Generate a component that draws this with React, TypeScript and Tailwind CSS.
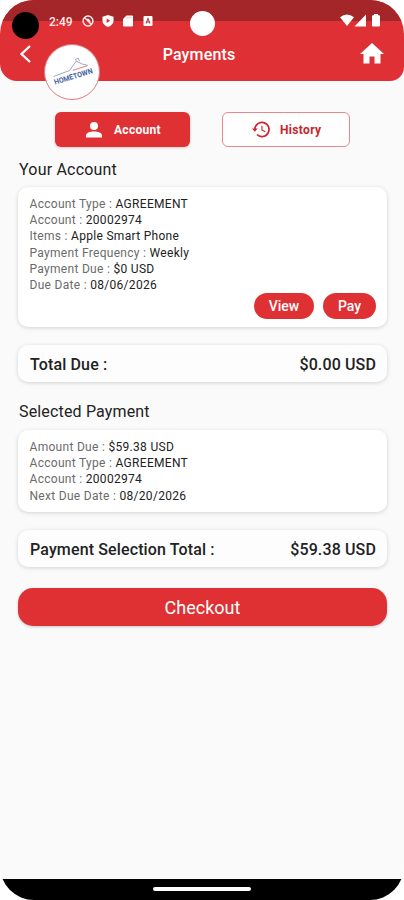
import type { ReactNode } from "react";

type Row = { label: string; value: string };

const accountRows: Row[] = [
  { label: "Account Type", value: "AGREEMENT" },
  { label: "Account", value: "20002974" },
  { label: "Items", value: "Apple Smart Phone" },
  { label: "Payment Frequency", value: "Weekly" },
  { label: "Payment Due", value: "$0 USD" },
  { label: "Due Date", value: "08/06/2026" },
];

const selectedRows: Row[] = [
  { label: "Amount Due", value: "$59.38 USD" },
  { label: "Account Type", value: "AGREEMENT" },
  { label: "Account", value: "20002974" },
  { label: "Next Due Date", value: "08/20/2026" },
];

function StatusBar() {
  return (
    <div className="flex h-[21px] items-start bg-[#a52628] pt-[12px] pr-[23px] pl-[12px]">
      <div className="h-[27px] w-[27px] shrink-0 rounded-full bg-black" />
      <span className="mt-[1px] ml-[10px] w-[25px] text-[12px] leading-[18px] font-medium text-[#ffe9e9]">
        2:49
      </span>
      <svg className="mt-[3px] ml-[8px] h-3 w-3 shrink-0" viewBox="0 0 12 12" fill="none" stroke="#ffe9e9" strokeWidth="1.500">
        <circle cx="6" cy="6" r="4.900" />
        <path d="M2.800 2.800l6.400 6.400M5.500 3.700l2.800 2.800" />
      </svg>
      <svg className="mt-[3px] ml-[8px] h-3 w-3 shrink-0" viewBox="0 0 12 12">
        <path d="M6 0l5.500 1.800v4C11.500 8.700 9 11 6 12 3 11 .500 8.700.500 5.800v-4z" fill="#fff" />
        <path d="M4.600 3.500v4.400L8.200 5.700z" fill="#d53033" />
      </svg>
      <svg className="mt-[3px] ml-[8px] h-3 w-3 shrink-0" viewBox="0 0 12 12">
        <path d="M4.500.5H10q1 0 1 1v9q0 1-1 1H2q-1 0-1-1V4z" fill="#fff" />
        <path d="M5.200 1.500v2M7 1.500v2M8.800 1.500v2" stroke="#e9a3a4" strokeWidth=".7" />
      </svg>
      <svg className="mt-[3px] ml-[8px] h-3 w-3 shrink-0" viewBox="0 0 12 12">
        <rect x="1.500" y="1" width="9" height="10" rx="1" fill="#fff" />
        <path d="M4 8.500L6 3.500l2 5M4.800 7h2.400" fill="none" stroke="#c4393b" strokeWidth="1.100" />
      </svg>
      <div className="mt-[-1px] ml-[36px] h-[25px] w-[25px] shrink-0 rounded-full bg-white" />
      <svg className="mt-[2px] ml-auto h-[13px] w-[41px] shrink-0" viewBox="0 0 41 13" fill="#fff">
        <path d="M0 3.200Q7-2 14 3.200L7 12z" />
        <path d="M26 .5V12.500H14.500z" />
        <path d="M34 0h4v1.300h1q1 0 1 1V11.500q0 1-1 1h-6q-1 0-1-1V2.300q0-1 1-1h1z" />
      </svg>
    </div>
  );
}

function Logo() {
  return (
    <div className="absolute top-[44px] left-[44px] h-[56px] w-[56px] rounded-full border border-[#e2797c] bg-white">
      <svg className="h-full w-full" viewBox="0 0 54 54">
        <g transform="rotate(-17 27 30)" fill="none">
          <path d="M9 26l17-1 9-7 5 4.500 5 3M35 17.500v-1.500h3v3" stroke="#828fa4" strokeWidth=".7" />
          <path d="M29 26l15-.5" stroke="#df8d96" strokeWidth="1.100" />
        </g>
      </svg>
      <span className="absolute top-[27px] left-[7px] origin-center scale-x-[0.93] -rotate-[17deg] text-[7.500px] leading-[10px] font-bold whitespace-nowrap text-[#4664a0]">
        HOMETOWN
      </span>
    </div>
  );
}

function Header() {
  return (
    <header className="relative h-[81px] rounded-br-[14px] rounded-bl-[17px] bg-[#df3135]">
      <StatusBar />
      <div className="flex items-start justify-between pr-[20px] pl-[19px] text-white">
        <svg className="mt-[24px] h-[18px] w-3" viewBox="0 0 12 18" fill="none" stroke="#fff" strokeWidth="2.300">
          <path d="M11 1L2.500 9l8.500 8" />
        </svg>
        <h1 className="mt-[22px] ml-[7px] text-[16px] leading-6 font-medium tracking-[0.150px]">Payments</h1>
        <svg className="mt-[21px] h-[23px] w-6" viewBox="0 0 24 23" fill="#fff">
          <path d="M12 1L0 12h3.500v9.500H9.500v-7h5v7h6V12H24z" />
        </svg>
      </div>
      <Logo />
    </header>
  );
}

function Card({ className, children }: { className: string; children: ReactNode }) {
  return (
    <div className={`mr-[17px] ml-[18px] rounded-[10px] shadow-[0_1px_4px_rgba(0,0,0,0.16)] ${className}`}>{children}</div>
  );
}

function Rows({ rows }: { rows: Row[] }) {
  return (
    <div className="text-[12px] leading-[16.200px] tracking-[0.300px]">
      {rows.map((row) => (
        <div key={row.label} className="whitespace-nowrap text-[#6b6b6b]">
          {row.label} : <span className="text-[#222]">{row.value}</span>
        </div>
      ))}
    </div>
  );
}

function TotalCard({ label, value, className }: { label: string; value: string; className: string }) {
  return (
    <Card className={`flex h-[37px] items-center justify-between bg-[#fdfdfd] pr-[11px] pl-[12px] text-[16px] font-medium tracking-[0.130px] text-[#222] ${className}`}>
      <span>{label} :</span>
      <span>{value}</span>
    </Card>
  );
}

export default function App() {
  return (
    <div className="h-[900px] w-[404px] bg-white font-['Roboto',sans-serif]">
      <div className="flex h-full flex-col overflow-hidden rounded-[34px] bg-[#fafafa]">
        <Header />

        <div className="mt-[31px] ml-[55px] flex gap-[32px] text-[12px] font-bold">
          <button className="flex h-[35px] w-[135px] items-center rounded-[6px] bg-[#df3033] pl-[31px] text-white shadow-[0_1px_3px_rgba(200,0,0,0.2)]">
            <svg className="h-4 w-4" viewBox="0 0 16 16" fill="#fff">
              <circle cx="8" cy="4" r="4" />
              <path d="M0 15.500v-2.200C0 10.800 4 9.500 8 9.500s8 1.300 8 3.800v2.200z" />
            </svg>
            <span className="ml-[12px] tracking-[0.300px]">Account</span>
          </button>
          <button className="flex h-[35px] w-[128px] items-center rounded-[6px] border border-[#e5898c] bg-[#fefefe] pl-[29px] text-[#c9252b]">
            <svg className="h-[17px] w-[18px]" viewBox="0 0 19 18" fill="none" stroke="#c9252b">
              <path d="M3 9a7.500 7.500 0 1 1 2.200 5.300" strokeWidth="1.800" />
              <path d="M0 8h6L3 11.500z" fill="#c9252b" stroke="none" />
              <path d="M10.500 5v4.500l3.500 2" strokeWidth="1.200" />
            </svg>
            <span className="ml-[10px] tracking-[0.350px]">History</span>
          </button>
        </div>

        <h2 className="mt-[11px] ml-[19px] text-[16px] leading-6 tracking-[0.200px] text-[#222]">Your Account</h2>
        <Card className="mt-[5px] flex h-[140px] flex-col bg-white pt-[9px] pr-[11px] pl-[11.500px]">
          <Rows rows={accountRows} />
          <div className="flex justify-end gap-[9px] text-[14px] font-medium text-white">
            <button className="h-[26px] w-[60px] rounded-full bg-[#df3033]">View</button>
            <button className="h-[26px] w-[53px] rounded-full bg-[#df3033]">Pay</button>
          </div>
        </Card>
        <TotalCard label="Total Due" value="$0.00 USD" className="mt-[18px] pt-[2px]" />

        <h2 className="mt-[18px] ml-[19px] text-[16px] leading-6 tracking-[0.160px] text-[#222]">Selected Payment</h2>
        <Card className="mt-[6px] h-[82px] bg-white pt-[9px] pl-[11.500px]">
          <Rows rows={selectedRows} />
        </Card>
        <TotalCard label="Payment Selection Total" value="$59.38 USD" className="mt-[18px] pt-[2px]" />

        <button className="mr-[17px] ml-[18px] mt-[21px] h-[38px] shrink-0 rounded-[15px] bg-[#df3033] text-[18px] text-white shadow-[0_1px_3px_rgba(0,0,0,0.2)]">
          Checkout
        </button>

        <div className="mt-auto flex h-[21px] justify-center bg-black pt-[8px]">
          <div className="h-1 w-[98px] rounded-full bg-white" />
        </div>
      </div>
    </div>
  );
}
